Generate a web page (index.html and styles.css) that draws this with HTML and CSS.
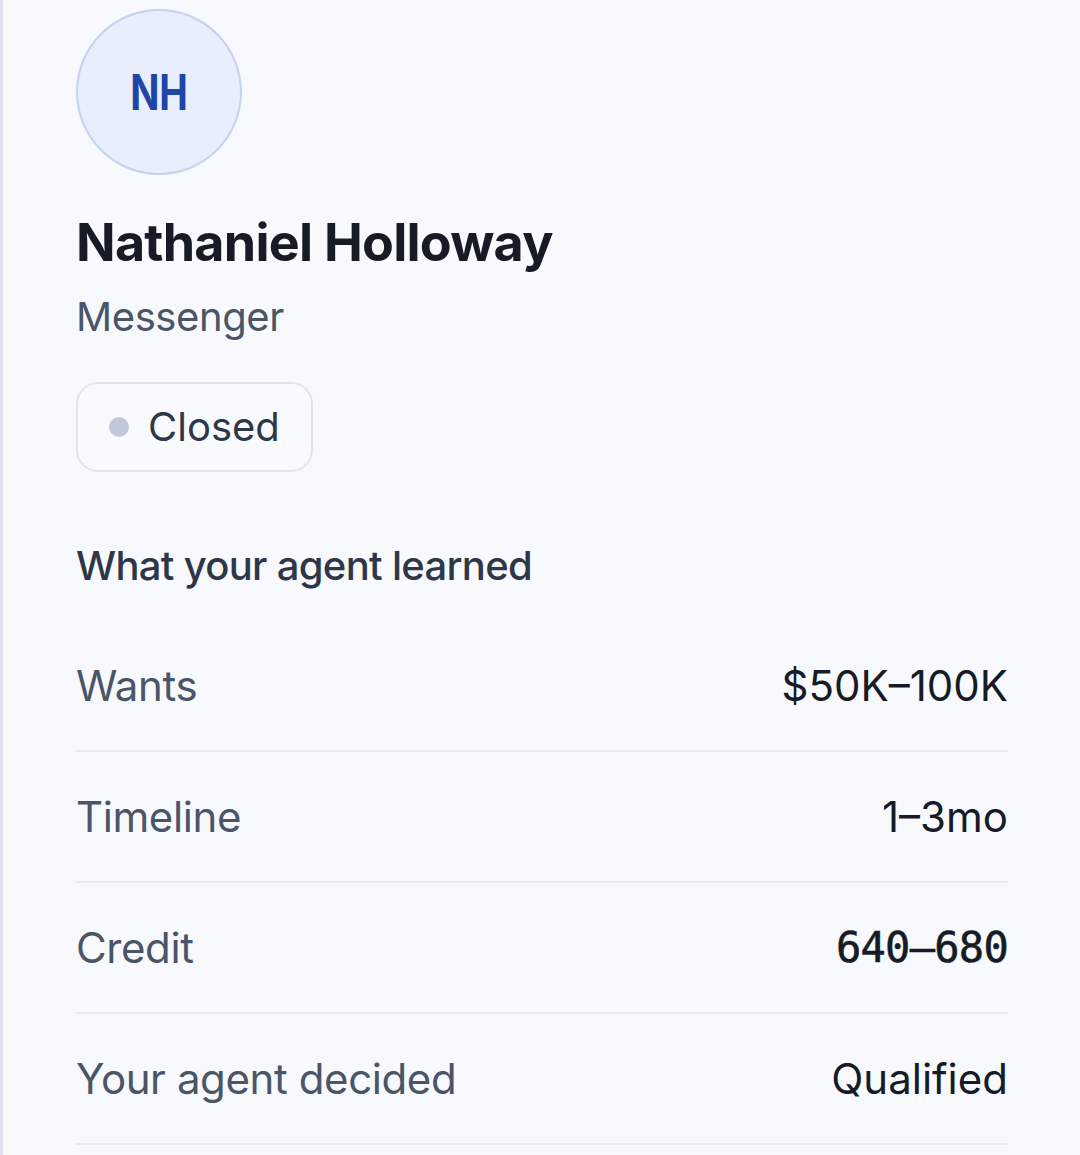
FILE: index.html
```html
<!DOCTYPE html>
<html lang="en">
<head>
    <meta charset="UTF-8">
    <meta name="viewport" content="width=device-width, initial-scale=1.0">
    <title>Lead - Nathaniel Holloway</title>
    <link rel="stylesheet" href="styles.css">
</head>
<body>
    <aside class="lead-panel">
        <div class="avatar"><span class="initials">NH</span></div>

        <h2 class="lead-name">Nathaniel Holloway</h2>
        <div class="lead-channel">Messenger</div>

        <div class="status-pill">
            <span class="status-dot"></span>
            <span>Closed</span>
        </div>

        <h3 class="section-title">What your agent learned</h3>

        <dl class="facts">
            <div class="fact-row">
                <dt>Wants</dt>
                <dd>$50K–100K</dd>
            </div>
            <div class="fact-row">
                <dt>Timeline</dt>
                <dd>1–3mo</dd>
            </div>
            <div class="fact-row">
                <dt>Credit</dt>
                <dd class="mono">640–680</dd>
            </div>
            <div class="fact-row">
                <dt>Your agent decided</dt>
                <dd>Qualified</dd>
            </div>
        </dl>
    </aside>
</body>
</html>
```

FILE: styles.css
```css
/* Reset default browser styles */
body, html {
    margin: 0;
    padding: 0;
    font-family: Inter, 'Noto Sans', sans-serif;
    background-color: #f7f9fd;
    color: #1a202c;
}

/* Side panel */
.lead-panel {
    min-height: 1155px;
    box-sizing: border-box;
    border-left: 3px solid #e1e4f0;
    padding: 9px 72px 0 73px;
}

.avatar {
    width: 166px;
    height: 166px;
    box-sizing: border-box;
    border-radius: 50%;
    border: 2px solid #c4d2ef;
    background-color: #e8eefb;
    color: #1e46a8;
    display: flex;
    align-items: center;
    justify-content: center;
}

.initials {
    font-size: 49px;
    font-weight: 700;
    line-height: 1;
    transform: scaleX(0.78); /* narrow glyphs like the design font */
}

.lead-name {
    margin: 37px 0 0;
    font-size: 52px;
    line-height: 1.2;
    font-weight: 700;
    letter-spacing: -0.75px;
    color: #161b26;
}

.lead-channel {
    margin-top: 19px;
    font-size: 40px;
    line-height: 1.2;
    letter-spacing: -0.4px;
    color: #4a5568;
}

/* Status pill */
.status-pill {
    display: inline-flex;
    align-items: center;
    gap: 19px;
    margin-top: 41px;
    padding: 19px 31px;
    border: 2px solid #e1e4ee;
    border-radius: 22px;
    background-color: #f9fafd;
    font-size: 40px;
    line-height: 1.2;
    color: #2d3748;
}

.status-dot {
    width: 20px;
    height: 20px;
    border-radius: 50%;
    background-color: #c0c8da;
}

.section-title {
    margin: 70px 0 0;
    font-size: 40px;
    line-height: 1.2;
    font-weight: 500;
    letter-spacing: -0.7px;
    color: #2d3748;
}

/* Facts list */
.facts {
    margin: 31px 0 0;
}

.fact-row {
    display: flex;
    justify-content: space-between;
    align-items: center;
    padding: 33px 0;
    border-bottom: 2px solid #e8ebf3;
    font-size: 42px;
    line-height: 1.5;
}

.fact-row dt {
    color: #4a5568;
    letter-spacing: -0.4px;
}

.fact-row dd {
    margin: 0;
    color: #161b26;
}

.fact-row dd.mono {
    font-family: 'DejaVu Sans Mono', 'Liberation Mono', monospace;
    letter-spacing: -0.7px;
    -webkit-text-stroke: 0.6px #161b26;
}
```
